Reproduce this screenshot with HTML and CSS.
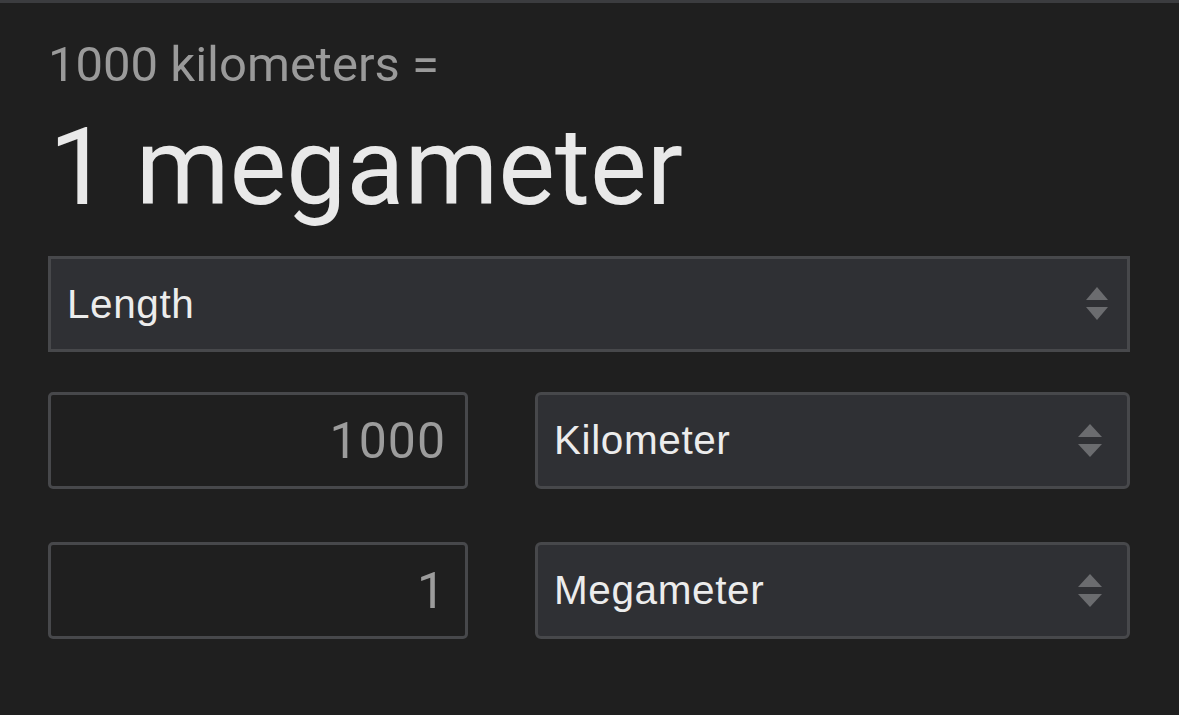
FILE: index.html
```html
<!DOCTYPE html>
<html>
<head>
<meta charset="utf-8">
<link rel="stylesheet" href="styles.css">
</head>
<body>
<div class="topline"></div>
<main class="wrap">
  <div class="label">1000 kilometers =</div>
  <div class="result">1 megameter</div>
  <div class="select select-main">
    <span>Length</span>
    <svg class="arrows" width="22" height="34" viewBox="0 0 22 34"><polygon points="11,0 22,13 0,13"/><polygon points="0,20 22,20 11,33"/></svg>
  </div>
  <div class="row row-first">
    <div class="num">1000</div>
    <div class="select select-unit">
      <span>Kilometer</span>
      <svg class="arrows" width="24" height="34" viewBox="0 0 24 34"><polygon points="12,0 24,13 0,13"/><polygon points="0,20 24,20 12,33"/></svg>
    </div>
  </div>
  <div class="row row-second">
    <div class="num">1</div>
    <div class="select select-unit">
      <span>Megameter</span>
      <svg class="arrows" width="24" height="34" viewBox="0 0 24 34"><polygon points="12,0 24,13 0,13"/><polygon points="0,20 24,20 12,33"/></svg>
    </div>
  </div>
</main>
</body>
</html>
```

FILE: styles.css
```css
html, body {
  margin: 0;
  padding: 0;
  background: #1f1f1f;
  height: 100%;
  overflow: hidden;
}
.topline {
  height: 3px;
  background: #3b3c3f;
}
.wrap {
  width: 1082px;
  padding-left: 48px;
}
.label {
  font-family: Roboto, "Noto Sans", sans-serif;
  font-size: 49px;
  line-height: 56px;
  color: #9a9a9a;
  margin-top: 34px;
}
.result {
  font-family: Roboto, "Noto Sans", sans-serif;
  font-size: 107px;
  line-height: 120px;
  color: #e9e9e9;
  margin-top: 15px;
  margin-left: 1px;
}
.select {
  box-sizing: border-box;
  display: flex;
  align-items: center;
  justify-content: space-between;
  background: #2f3034;
  border: 3px solid #47484b;
  padding-left: 16px;
  font-family: "Liberation Sans", Arial, sans-serif;
  font-size: 40.5px;
  letter-spacing: 0.6px;
  color: #ececec;
}
.select-main {
  height: 96px;
  margin-top: 28px;
  padding-right: 19px;
}
.arrows {
  fill: #6b6c6f;
  display: block;
}
.row {
  display: flex;
  gap: 67px;
  height: 97px;
}
.row-first { margin-top: 40px; }
.row-second { margin-top: 53px; }
.num {
  box-sizing: border-box;
  width: 420px;
  border: 3px solid #47484b;
  border-radius: 5px;
  display: flex;
  align-items: center;
  justify-content: flex-end;
  padding-right: 19px;
  font-family: Roboto, "Noto Sans", sans-serif;
  font-size: 50px;
  letter-spacing: 1px;
  color: #9c9c9c;
}
.select-unit {
  flex: 1;
  border-radius: 6px;
  padding-right: 25px;
}
```
